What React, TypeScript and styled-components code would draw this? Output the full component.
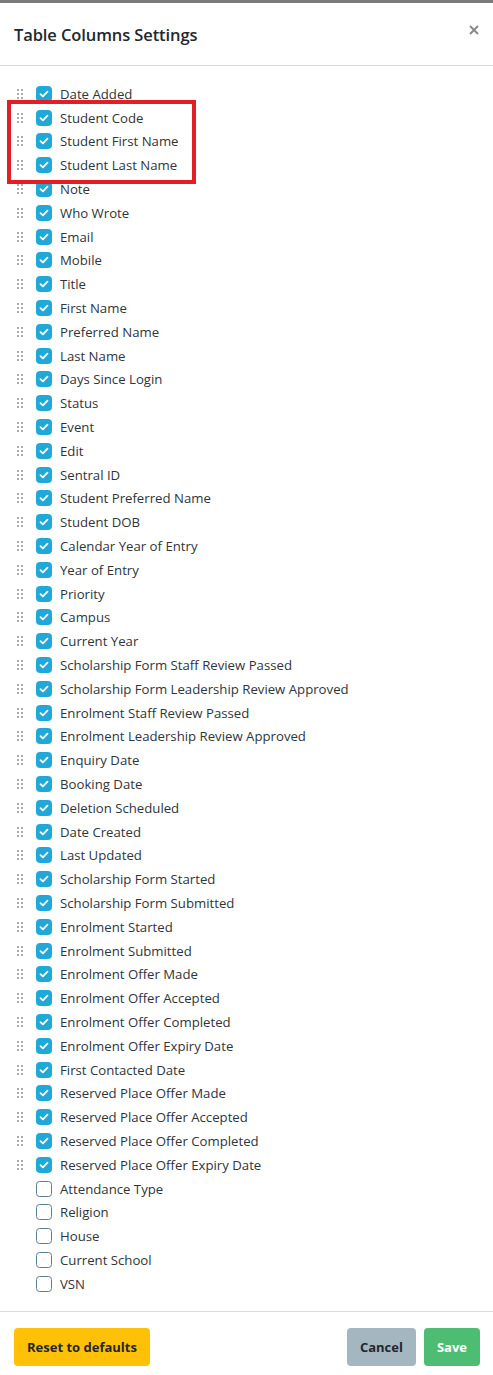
import React from "react";
import styled, { createGlobalStyle } from "styled-components";

const Global = createGlobalStyle`
  html, body { margin: 0; padding: 0; background: #fff; }
  body { font-family: "Open Sans", "Noto Sans", sans-serif; color: #23282c; }
  * { box-sizing: border-box; }
`;

const Modal = styled.div`
  width: 493px;
  min-height: 1375px;
  background: #fff;
  border-top: 3px solid #7a7a7a;
  display: flex;
  flex-direction: column;
`;

const Header = styled.div`
  height: 63px;
  padding: 0 14px;
  display: flex;
  align-items: center;
  justify-content: space-between;
  border-bottom: 1px solid #d8dbe0;
`;

const Title = styled.h5`
  margin: 0;
  font-size: 16.5px;
  font-weight: 600;
  color: #23282c;
  letter-spacing: -0.1px;
`;

const Close = styled.button`
  border: none;
  background: none;
  padding: 0;
  margin-top: -8px;
  color: #8a8a8a;
  display: flex;
  cursor: pointer;
`;

const Body = styled.div`
  position: relative;
  padding: 16px 14px 15px;
`;

const Row = styled.div`
  height: 23.8px;
  display: flex;
  align-items: center;
`;

const Handle = styled.div<{ $hidden?: boolean }>`
  width: 22px;
  padding-left: 3px;
  display: grid;
  grid-template-columns: repeat(2, 2px);
  grid-auto-rows: 2px;
  column-gap: 2px;
  row-gap: 2px;
  visibility: ${(p) => (p.$hidden ? "hidden" : "visible")};
  & > span {
    background: #8f8f8f;
    border-radius: 1px;
  }
`;

const Box = styled.span<{ $checked: boolean }>`
  width: 16px;
  height: 16px;
  border-radius: 3.5px;
  flex: none;
  display: flex;
  align-items: center;
  justify-content: center;
  background: ${(p) => (p.$checked ? "#20a8d8" : "#fff")};
  border: 1px solid ${(p) => (p.$checked ? "#20a8d8" : "#5f7d90")};
`;

const Label = styled.span`
  margin-left: 8px;
  font-size: 13.2px;
  color: #2f353a;
  white-space: nowrap;
`;

const Highlight = styled.div`
  position: absolute;
  left: 7px;
  top: 34px;
  width: 189px;
  height: 84px;
  border: 4px solid #e31e24;
  pointer-events: none;
`;

const Footer = styled.div`
  border-top: 1px solid #d8dbe0;
  padding: 16px 13px 16px 14px;
  display: flex;
  align-items: center;
`;

const Btn = styled.button<{ $bg: string; $fg: string }>`
  height: 38px;
  padding: 0 13px;
  border: none;
  border-radius: 4px;
  background: ${(p) => p.$bg};
  color: ${(p) => p.$fg};
  font-family: "Open Sans", "Noto Sans", sans-serif;
  font-size: 13px;
  font-weight: 700;
  cursor: pointer;
`;

const Spacer = styled.div`
  flex: 1;
`;

const Gap = styled.div`
  width: 8px;
`;

const checked = [
  "Date Added",
  "Student Code",
  "Student First Name",
  "Student Last Name",
  "Note",
  "Who Wrote",
  "Email",
  "Mobile",
  "Title",
  "First Name",
  "Preferred Name",
  "Last Name",
  "Days Since Login",
  "Status",
  "Event",
  "Edit",
  "Sentral ID",
  "Student Preferred Name",
  "Student DOB",
  "Calendar Year of Entry",
  "Year of Entry",
  "Priority",
  "Campus",
  "Current Year",
  "Scholarship Form Staff Review Passed",
  "Scholarship Form Leadership Review Approved",
  "Enrolment Staff Review Passed",
  "Enrolment Leadership Review Approved",
  "Enquiry Date",
  "Booking Date",
  "Deletion Scheduled",
  "Date Created",
  "Last Updated",
  "Scholarship Form Started",
  "Scholarship Form Submitted",
  "Enrolment Started",
  "Enrolment Submitted",
  "Enrolment Offer Made",
  "Enrolment Offer Accepted",
  "Enrolment Offer Completed",
  "Enrolment Offer Expiry Date",
  "First Contacted Date",
  "Reserved Place Offer Made",
  "Reserved Place Offer Accepted",
  "Reserved Place Offer Completed",
  "Reserved Place Offer Expiry Date",
];

const unchecked = ["Attendance Type", "Religion", "House", "Current School", "VSN"];

const Check = () => (
  <svg width="10" height="8" viewBox="0 0 10 8">
    <path d="M1.5 4.2 L3.9 6.4 L8.5 1.6" fill="none" stroke="#fff" strokeWidth="1.8" strokeLinecap="round" strokeLinejoin="round" />
  </svg>
);

const Item = ({ label, on }: { label: string; on: boolean }) => (
  <Row>
    <Handle $hidden={!on}>
      {Array.from({ length: 6 }).map((_, i) => (
        <span key={i} />
      ))}
    </Handle>
    <Box $checked={on}>{on && <Check />}</Box>
    <Label>{label}</Label>
  </Row>
);

export default function App() {
  return (
    <>
      <Global />
      <Modal>
        <Header>
          <Title>Table Columns Settings</Title>
          <Close aria-label="Close">
            <svg width="10" height="10" viewBox="0 0 10 10">
              <path d="M1 1 L9 9 M9 1 L1 9" stroke="currentColor" strokeWidth="2" />
            </svg>
          </Close>
        </Header>
        <Body>
          {checked.map((l) => (
            <Item key={l} label={l} on />
          ))}
          {unchecked.map((l) => (
            <Item key={l} label={l} on={false} />
          ))}
          <Highlight />
        </Body>
        <Footer>
          <Btn $bg="#ffc107" $fg="#23282c">Reset to defaults</Btn>
          <Spacer />
          <Btn $bg="#a4b7c1" $fg="#23282c">Cancel</Btn>
          <Gap />
          <Btn $bg="#4dbd74" $fg="#fff">Save</Btn>
        </Footer>
      </Modal>
    </>
  );
}
